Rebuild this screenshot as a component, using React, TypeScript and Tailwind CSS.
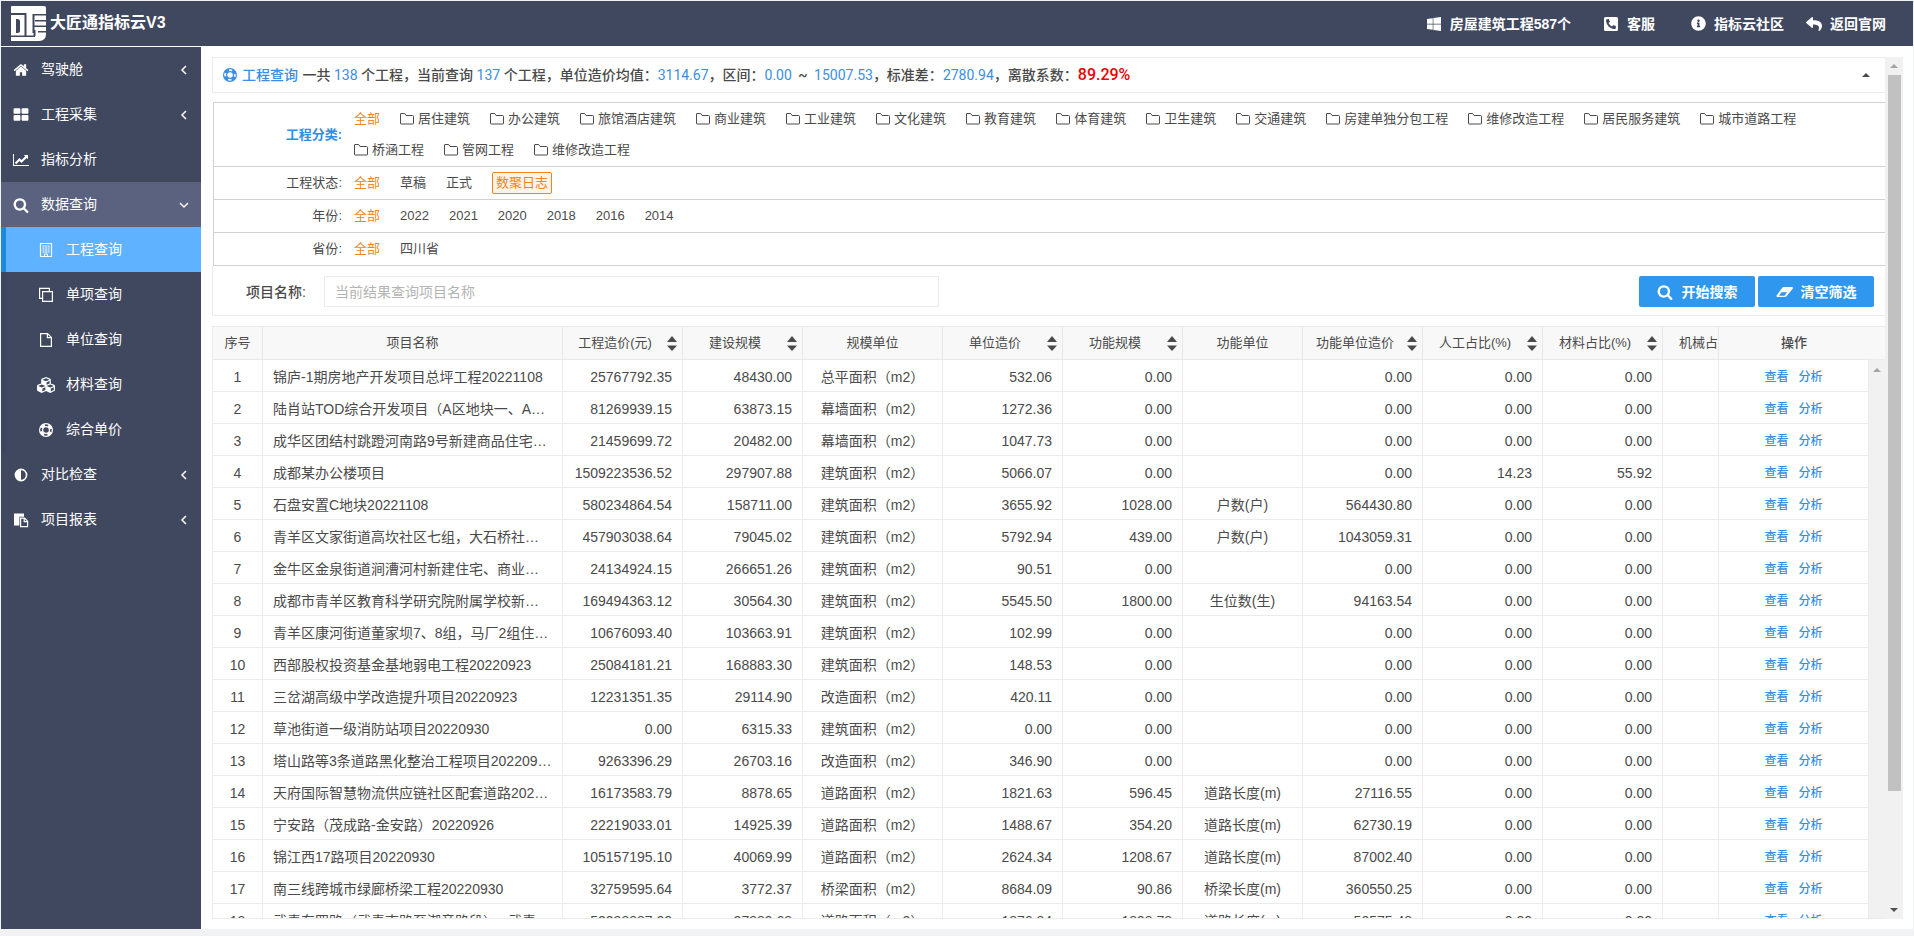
import { useState } from "react";
import type { ReactNode } from "react";
import {
  FaCubes,
  FaInfoCircle,
  FaPhoneSquareAlt,
  FaReply,
  FaWindows,
} from "react-icons/fa";

const Glyph = ({
  d,
  box = "0 0 1792 1792",
  className = "size-4",
}: {
  d: string;
  box?: string;
  className?: string;
}) => (
  <svg viewBox={box} className={className} fill="currentColor">
    <path d={d} />
  </svg>
);

const HomeIcon = () => (
  <Glyph d="M1472 992v480q0 26-19 45t-45 19h-384v-384h-256v384h-384q-26 0-45-19t-19-45v-480q0-1 .5-3t.5-3l575-474 575 474q1 2 1 6zm223-69l-62 74q-8 9-21 11h-3q-13 0-21-7l-692-577-692 577q-12 8-24 7-13-2-21-11l-62-74q-8-10-7-23.5t11-21.5l719-599q32-26 76-26t76 26l244 204v-195q0-14 9-23t23-9h192q14 0 23 9t9 23v408l219 182q10 8 11 21.5t-7 23.5z" />
);

const GridIcon = () => (
  <Glyph d="M832 1024v384q0 52-38 90t-90 38h-512q-52 0-90-38t-38-90v-384q0-52 38-90t90-38h512q52 0 90 38t38 90zm0-768v384q0 52-38 90t-90 38h-512q-52 0-90-38t-38-90v-384q0-52 38-90t90-38h512q52 0 90 38t38 90zm896 768v384q0 52-38 90t-90 38h-512q-52 0-90-38t-38-90v-384q0-52 38-90t90-38h512q52 0 90 38t38 90zm0-768v384q0 52-38 90t-90 38h-512q-52 0-90-38t-38-90v-384q0-52 38-90t90-38h512q52 0 90 38t38 90z" />
);

const ChartIcon = () => (
  <Glyph
    box="0 0 2048 1792"
    d="M2048 1536v128h-2048v-1536h128v1408h1920zm-128-1248v435q0 21-19.5 29.5t-35.5-7.5l-121-121-633 633q-10 10-23 10t-23-10l-233-233-416 416-192-192 585-585q10-10 23-10t23 10l233 233 464-464-121-121q-16-16-7.5-35.5t29.5-19.5h435q14 0 23 9t9 23z"
  />
);

const SearchIcon = () => (
  <Glyph d="M1216 832q0-185-131.5-316.5t-316.5-131.5-316.5 131.5-131.5 316.5 131.5 316.5 316.5 131.5 316.5-131.5 131.5-316.5zm512 832q0 52-38 90t-90 38q-54 0-90-38l-343-342q-179 124-399 124-143 0-273.5-55.5t-225-150-150-225-55.5-273.5 55.5-273.5 150-225 225-150 273.5-55.5 273.5 55.5 225 150 150 225 55.5 273.5q0 220-124 399l343 343q37 37 37 90z" />
);

const BuildingIcon = () => (
  <svg viewBox="0 0 16 16" className="size-4" fill="none" stroke="currentColor">
    <path d="M2.500 1.500h11v13h-11z" strokeWidth="1.200" />
    <path d="M4.500 4h7M4.500 6h7M4.500 8h7M4.500 10h7" strokeDasharray="2 .5" />
    <path d="M6.500 14.500v-2.500h3v2.500" />
  </svg>
);

const CloneIcon = () => (
  <svg viewBox="0 0 16 16" className="size-4" fill="none" stroke="currentColor" strokeWidth="1.2">
    <path d="M4.6 11.4h-3v-10h9.8v3" />
    <path d="M4.6 4.6h9.8v9.8H4.6z" />
  </svg>
);

const FileIcon = () => (
  <svg viewBox="0 0 16 16" className="size-4" fill="none" stroke="currentColor" strokeWidth="1.2">
    <path d="M2.6 1.6h7l3.8 3.8v9H2.6z" />
    <path d="M9.4 1.6v4h4" />
  </svg>
);

const RingIcon = () => (
  <svg viewBox="0 0 16 16" className="size-4" fill="none" stroke="currentColor">
    <circle cx="8" cy="8" r="6.4" strokeWidth="1.2" />
    <circle cx="8" cy="8" r="3.4" strokeWidth="1.2" />
    <circle cx="8" cy="8" r="5" strokeWidth="3" strokeDasharray="4.4 3.454" strokeDashoffset="-1.727" />
  </svg>
);

const AdjustIcon = () => (
  <svg viewBox="0 0 16 16" className="size-4">
    <circle cx="8" cy="8" r="5.6" fill="none" stroke="currentColor" strokeWidth="1.6" />
    <path d="M8 2.6a5.4 5.4 0 0 0 0 10.8z" fill="currentColor" />
  </svg>
);

const PasteIcon = () => (
  <svg viewBox="0 0 16 16" className="size-4" fill="none" stroke="currentColor">
    <path d="M1 1.6h10v3.2H6.4v8.6H1z" fill="currentColor" stroke="none" />
    <path d="M7.6 6.2h4l3 3v5.4h-7z" strokeWidth="1.2" />
    <path d="M11.2 6v3.6h3.6" strokeWidth="1.2" />
  </svg>
);

const EraserIcon = () => (
  <svg viewBox="0 0 18 16" className="h-4 w-[18px]">
    <path
      d="M7.6 3h8.2c1 0 1.5.9.9 1.7l-6 7.4c-.5.6-1.1.9-1.8.9H1.7c-1 0-1.5-.9-.9-1.7l5.3-7.4c.4-.6.9-.9 1.5-.9zM3 11.700h5.500l2.700-3.400H5.500z"
      fill="currentColor"
      fillRule="evenodd"
    />
  </svg>
);

const FolderIcon = () => (
  <svg viewBox="0 0 14 14" className="size-[14px]" fill="none" stroke="currentColor">
    <path d="M.5 11.5v-9.5q0-.5.5-.5h3.7l1.3 2h6.5q1 0 1 1v7q0 .5-.5.5H1q-.5 0-.5-.5z" />
  </svg>
);

const Chevron = ({ open }: { open: boolean }) => (
  <svg viewBox="0 0 10 10" className="size-[10px]" fill="none" stroke="currentColor" strokeWidth="1.5">
    <path d={open ? "M1 3l4 4 4-4" : "M7 1L3 5l4 4"} />
  </svg>
);

const Caret = ({ down = false }: { down?: boolean }) => (
  <svg viewBox="0 0 8 4" className="h-1 w-2" fill="currentColor">
    <path d={down ? "M0 0h8L4 4z" : "M0 4h8L4 0z"} />
  </svg>
);

const Logo = () => (
  <svg viewBox="0 0 35 35" className="size-[35px]">
    <path d="M1 0h32q2 0 2 2v26q0 7-7 7H0V1q0-1 1-1z" fill="#fff" />
    <path
      d="M0 7h15v2H0zM5 13h1.500q2.500 0 2.500 2.500v9q0 2.500-2.500 2.500H5zM13.500 7h2V30h-2zM0 29.500h24V31H0zM21.500 8h2v19h-2zM22 8h13v1.500H22zM24 14h11v1.500H24zM22 19.500h13V21H22zM27 25h8v1.500h-8zM22.500 24h2v6h-2z"
      fill="#3f485f"
    />
  </svg>
);

const menu: { title: string; icon: ReactNode; arrow?: boolean; children?: { title: string; icon: ReactNode }[] }[] = [
  { title: "驾驶舱", icon: <HomeIcon />, arrow: true },
  { title: "工程采集", icon: <GridIcon />, arrow: true },
  { title: "指标分析", icon: <ChartIcon /> },
  {
    title: "数据查询",
    icon: <SearchIcon />,
    arrow: true,
    children: [
      { title: "工程查询", icon: <BuildingIcon /> },
      { title: "单项查询", icon: <CloneIcon /> },
      { title: "单位查询", icon: <FileIcon /> },
      { title: "材料查询", icon: <FaCubes className="size-[18px] shrink-0" /> },
      { title: "综合单价", icon: <RingIcon /> },
    ],
  },
  { title: "对比检查", icon: <AdjustIcon />, arrow: true },
  { title: "项目报表", icon: <PasteIcon />, arrow: true },
];

const categories = [
  "居住建筑", "办公建筑", "旅馆酒店建筑", "商业建筑", "工业建筑", "文化建筑", "教育建筑",
  "体育建筑", "卫生建筑", "交通建筑", "房建单独分包工程", "维修改造工程", "居民服务建筑",
  "城市道路工程", "桥涵工程", "管网工程", "维修改造工程",
];

const columns = [
  { title: "工程造价(元)", sort: true },
  { title: "建设规模", sort: true },
  { title: "规模单位", sort: false },
  { title: "单位造价", sort: true },
  { title: "功能规模", sort: true },
  { title: "功能单位", sort: false },
  { title: "功能单位造价", sort: true },
  { title: "人工占比(%)", sort: true },
  { title: "材料占比(%)", sort: true },
];

// name, cost, scale, scale unit, unit cost, function scale, function unit, function unit cost, labour, material
const rows = [
  ["锦庐-1期房地产开发项目总坪工程20221108", "25767792.35", "48430.00", "总平面积（m2）", "532.06", "0.00", "", "0.00", "0.00", "0.00"],
  ["陆肖站TOD综合开发项目（A区地块一、A区）", "81269939.15", "63873.15", "幕墙面积（m2）", "1272.36", "0.00", "", "0.00", "0.00", "0.00"],
  ["成华区团结村跳蹬河南路9号新建商品住宅项目", "21459699.72", "20482.00", "幕墙面积（m2）", "1047.73", "0.00", "", "0.00", "0.00", "0.00"],
  ["成都某办公楼项目", "1509223536.52", "297907.88", "建筑面积（m2）", "5066.07", "0.00", "", "0.00", "14.23", "55.92"],
  ["石盘安置C地块20221108", "580234864.54", "158711.00", "建筑面积（m2）", "3655.92", "1028.00", "户数(户)", "564430.80", "0.00", "0.00"],
  ["青羊区文家街道高坎社区七组，大石桥社区项目", "457903038.64", "79045.02", "建筑面积（m2）", "5792.94", "439.00", "户数(户)", "1043059.31", "0.00", "0.00"],
  ["金牛区金泉街道涧漕河村新建住宅、商业用房", "24134924.15", "266651.26", "建筑面积（m2）", "90.51", "0.00", "", "0.00", "0.00", "0.00"],
  ["成都市青羊区教育科学研究院附属学校新建项目", "169494363.12", "30564.30", "建筑面积（m2）", "5545.50", "1800.00", "生位数(生)", "94163.54", "0.00", "0.00"],
  ["青羊区康河街道董家坝7、8组，马厂2组住宅项目", "10676093.40", "103663.91", "建筑面积（m2）", "102.99", "0.00", "", "0.00", "0.00", "0.00"],
  ["西部股权投资基金基地弱电工程20220923", "25084181.21", "168883.30", "建筑面积（m2）", "148.53", "0.00", "", "0.00", "0.00", "0.00"],
  ["三岔湖高级中学改造提升项目20220923", "12231351.35", "29114.90", "改造面积（m2）", "420.11", "0.00", "", "0.00", "0.00", "0.00"],
  ["草池街道一级消防站项目20220930", "0.00", "6315.33", "建筑面积（m2）", "0.00", "0.00", "", "0.00", "0.00", "0.00"],
  ["塔山路等3条道路黑化整治工程项目20220930", "9263396.29", "26703.16", "改造面积（m2）", "346.90", "0.00", "", "0.00", "0.00", "0.00"],
  ["天府国际智慧物流供应链社区配套道路20220930", "16173583.79", "8878.65", "道路面积（m2）", "1821.63", "596.45", "道路长度(m)", "27116.55", "0.00", "0.00"],
  ["宁安路（茂成路-金安路）20220926", "22219033.01", "14925.39", "道路面积（m2）", "1488.67", "354.20", "道路长度(m)", "62730.19", "0.00", "0.00"],
  ["锦江西17路项目20220930", "105157195.10", "40069.99", "道路面积（m2）", "2624.34", "1208.67", "道路长度(m)", "87002.40", "0.00", "0.00"],
  ["南三线跨城市绿廊桥梁工程20220930", "32759595.64", "3772.37", "桥梁面积（m2）", "8684.09", "90.86", "桥梁长度(m)", "360550.25", "0.00", "0.00"],
  ["武青东四路（武青南路至潮音路段）、 武青西路", "52388887.00", "27889.68", "道路面积（m2）", "1876.84", "1898.78", "道路长度(m)", "50575.48", "0.00", "0.00"],
];

const Header = () => (
  <header className="flex h-[45px] shrink-0 items-center justify-between bg-[#3f485f] pr-[27px] pl-[10px] font-bold text-white">
    <div className="flex items-center gap-1">
      <Logo />
      <h1 className="pb-0.5 text-base leading-6">大匠通指标云V3</h1>
    </div>
    <nav className="flex items-center text-sm">
      <a href="#" className="mr-8 flex items-center gap-2">
        <FaWindows className="size-4" />
        房屋建筑工程587个
      </a>
      <a href="#" className="mr-9 flex items-center gap-2">
        <FaPhoneSquareAlt className="size-4" />
        客服
      </a>
      <a href="#" className="mr-[22px] flex items-center gap-2">
        <FaInfoCircle className="size-[15px]" />
        指标云社区
      </a>
      <a href="#" className="flex items-center gap-2">
        <FaReply className="size-4" />
        返回官网
      </a>
    </nav>
  </header>
);

const Sidebar = () => (
  <aside className="w-[200px] shrink-0 bg-[#3f485f] text-sm text-white">
    {menu.map((item) => (
      <div key={item.title}>
        <button
          className={`flex h-[45px] w-full items-center pr-3 pl-3 text-left ${item.children ? "bg-[#5a6280]" : ""}`}
        >
          <span className="mr-3 flex w-4 justify-center">{item.icon}</span>
          <span className="flex-1 pb-0.5">{item.title}</span>
          {item.arrow && <Chevron open={!!item.children} />}
        </button>
        {item.children?.map((child, key) => (
          <a
            key={child.title}
            href="#"
            className={`flex h-[45px] items-center border-l-5 pl-8 ${
              key === 0 ? "border-[#1e88dc] bg-[#5fb2ff]" : "border-[#3b455e]"
            }`}
          >
            <span className="mr-3 flex w-4 shrink-0 justify-center">{child.icon}</span>
            <span className="pb-0.5">{child.title}</span>
          </a>
        ))}
      </div>
    ))}
  </aside>
);

const FilterRow = ({ label, children }: { label: string; children: ReactNode }) => (
  <div className="flex items-center border-b border-[#d0d0d0]">
    <div className="w-32 shrink-0 text-right">{label}:</div>
    <div className="flex flex-1 flex-wrap gap-x-5 pr-3 pl-3 leading-8">
      <a href="#" className="text-[#f0861a]">全部</a>
      {children}
    </div>
  </div>
);

const Filters = () => (
  <section className="mt-[9px] ml-px border-t border-l border-[#d0d0d0] text-[13px]">
    <div className="flex items-center border-b border-[#d0d0d0]">
      <div className="w-32 shrink-0 text-right font-bold text-[#2d8fe6]">工程分类:</div>
      <div className="flex flex-1 flex-wrap gap-x-5 pb-px pl-3 leading-[31px]">
        <a href="#" className="text-[#f0861a]">全部</a>
        {categories.map((name, key) => (
          <a key={key} href="#" className="flex items-center gap-1">
            <FolderIcon />
            {name}
          </a>
        ))}
      </div>
    </div>
    <FilterRow label="工程状态">
      <a href="#">草稿</a>
      <a href="#">正式</a>
      <a
        href="#"
        className="self-center rounded-xs border border-[#f0861a] bg-[#fdf3e8] px-[3px] leading-5 text-[#f0861a]"
      >
        数聚日志
      </a>
    </FilterRow>
    <FilterRow label="年份">
      {["2022", "2021", "2020", "2018", "2016", "2014"].map((year) => (
        <a key={year} href="#">{year}</a>
      ))}
    </FilterRow>
    <FilterRow label="省份">
      <a href="#">四川省</a>
    </FilterRow>
  </section>
);

const Num = ({ children }: { children: string }) => (
  <span className="font-normal text-[#3a8ee6]">{children}</span>
);

const Summary = () => (
  <section className="flex h-9 shrink-0 items-center border border-r-0 border-[#ebebeb] pr-[15px] pl-[9px]">
    <span className="text-[#3a8ee6]">
      <RingIcon />
    </span>
    <p className="flex-1 pl-1 font-[Roboto,'Noto_Sans_CJK_SC',sans-serif] text-sm font-medium whitespace-nowrap">
      <span className="mr-px text-[#3a8ee6]">工程查询</span> 一共 <Num>138</Num> 个工程，当前查询 <Num>137</Num>{" "}
      个工程，单位造价均值：<Num>3114.67</Num>，区间：<Num>0.00</Num>
      <span className="mx-[3px]"> ~ </span>
      <Num>15007.53</Num>，标准差：<Num>2780.94</Num>，离散系数：
      <span className="text-base leading-5 text-[#f00000]">89.29%</span>
    </p>
    <button aria-label="收起">
      <Caret />
    </button>
  </section>
);

const SearchBar = () => {
  const [keyword, setKeyword] = useState("");

  return (
    <form
      className="flex h-[50px] shrink-0 items-center border-b border-l border-[#ebebeb] pt-0.5 pr-[11px] pl-[33px] text-sm"
      onSubmit={(e) => e.preventDefault()}
    >
      <label htmlFor="keyword" className="mr-[18px] font-medium">
        项目名称:
      </label>
      <input
        id="keyword"
        value={keyword}
        onChange={(e) => setKeyword(e.target.value)}
        placeholder="当前结果查询项目名称"
        className="h-[31px] w-[615px] border border-[#ebebeb] px-[10px] outline-none placeholder:text-[#b4b4b4]"
      />
      <div className="ml-auto flex gap-[3px] font-bold text-white">
        <button
          type="submit"
          className="flex h-[31px] w-[116px] items-center justify-center gap-[9px] rounded-xs bg-[#2f98ee]"
        >
          <SearchIcon />
          开始搜索
        </button>
        <button
          type="button"
          onClick={() => setKeyword("")}
          className="flex h-[31px] w-[116px] items-center justify-center gap-[7px] rounded-xs bg-[#2f98ee]"
        >
          <EraserIcon />
          清空筛选
        </button>
      </div>
    </form>
  );
};

const ProjectTable = () => (
  <section className="mt-[10px] flex min-h-0 flex-1 overflow-hidden border border-r-0 border-[#ebebeb]">
    <div className="min-w-0 flex-1">
      <table className="w-full table-fixed border-separate border-spacing-0 text-sm">
        <colgroup>
          <col className="w-[50px]" />
          <col className="w-[300px]" />
          <col className="w-[120px]" />
          <col className="w-[120px]" />
          <col className="w-[140px]" />
          <col className="w-[120px]" />
          <col className="w-[120px]" />
          <col className="w-[120px]" />
          <col className="w-[120px]" />
          <col className="w-[120px]" />
          <col className="w-[120px]" />
          <col />
          <col className="w-[150px]" />
        </colgroup>
        <thead className="bg-[#f8f8f8] text-[13px]">
          <tr className="h-[33px] *:border-r *:border-b *:border-[#e8e8e8] *:p-0 *:font-normal *:last:border-r-0">
            <th>序号</th>
            <th>项目名称</th>
            {columns.map((col) => (
              <th key={col.title}>
                {col.sort ? (
                  <div className="flex items-center pr-[5px]">
                    <span className="flex-1">{col.title}</span>
                    <button aria-label={`${col.title}排序`}>
                      <svg viewBox="0 0 10 15" className="h-[15px] w-[10px]" fill="currentColor">
                        <path d="M0 6h10L5 0zM0 9.5h10l-5 5.5z" />
                      </svg>
                    </button>
                  </div>
                ) : (
                  col.title
                )}
              </th>
            ))}
            <th>
              <div className="overflow-hidden pl-4 text-left whitespace-nowrap">机械占</div>
            </th>
            <th>
              <span className="font-medium">操作</span>
            </th>
          </tr>
        </thead>
        <tbody>
          {rows.map((row, key) => (
            <tr
              key={key}
              className="h-8 text-right *:border-r *:border-b *:border-[#ebebeb] *:px-[10px] *:pt-0.5 *:pb-0"
            >
              <td className="text-center">{key + 1}</td>
              <td className="truncate text-left">{row[0]}</td>
              <td>{row[1]}</td>
              <td>{row[2]}</td>
              <td className="text-center">{row[3]}</td>
              <td>{row[4]}</td>
              <td>{row[5]}</td>
              <td className="text-center">{row[6]}</td>
              <td>{row[7]}</td>
              <td>{row[8]}</td>
              <td>{row[9]}</td>
              <td></td>
              <td>
                <div className="flex justify-center gap-[10px] text-xs font-medium text-[#3490e6]">
                  <a href="#">查看</a>
                  <a href="#">分析</a>
                </div>
              </td>
            </tr>
          ))}
        </tbody>
      </table>
    </div>
    <div className="flex w-4 shrink-0 flex-col">
      <div className="h-[33px] border-b border-[#ebebeb] bg-[#f8f8f8]" />
      <div className="flex flex-1 justify-center bg-[#f1f1f1] pt-2 text-[#a3a3a3]">
        <Caret />
      </div>
    </div>
  </section>
);

const ScrollBar = () => (
  <div className="flex w-[18px] shrink-0 flex-col items-center bg-[#f1f1f1]">
    <div className="flex h-[18px] items-center text-[#a3a3a3]">
      <Caret />
    </div>
    <div className="flex w-[13px] flex-1 flex-col">
      <div className="flex-[13] bg-[#c1c1c1]" />
      <div className="flex-[2]" />
    </div>
    <div className="flex h-[18px] items-center text-[#505050]">
      <Caret down />
    </div>
  </div>
);

const App = () => {
  return (
    <div className="flex h-screen flex-col bg-[#f1f2f4] px-px pt-px pb-[7px] font-['Liberation_Sans','Noto_Sans_CJK_SC',sans-serif] text-[#4a4a4a]">
      <Header />
      <div className="flex min-h-0 flex-1 bg-white pt-px">
        <Sidebar />
        <main className="flex min-w-0 flex-1 pt-[10px] pr-[10px] pb-[10px] pl-[11px]">
          <div className="flex min-w-0 flex-1 flex-col">
            <Summary />
            <Filters />
            <SearchBar />
            <ProjectTable />
          </div>
          <ScrollBar />
        </main>
      </div>
    </div>
  );
};

export default App;
